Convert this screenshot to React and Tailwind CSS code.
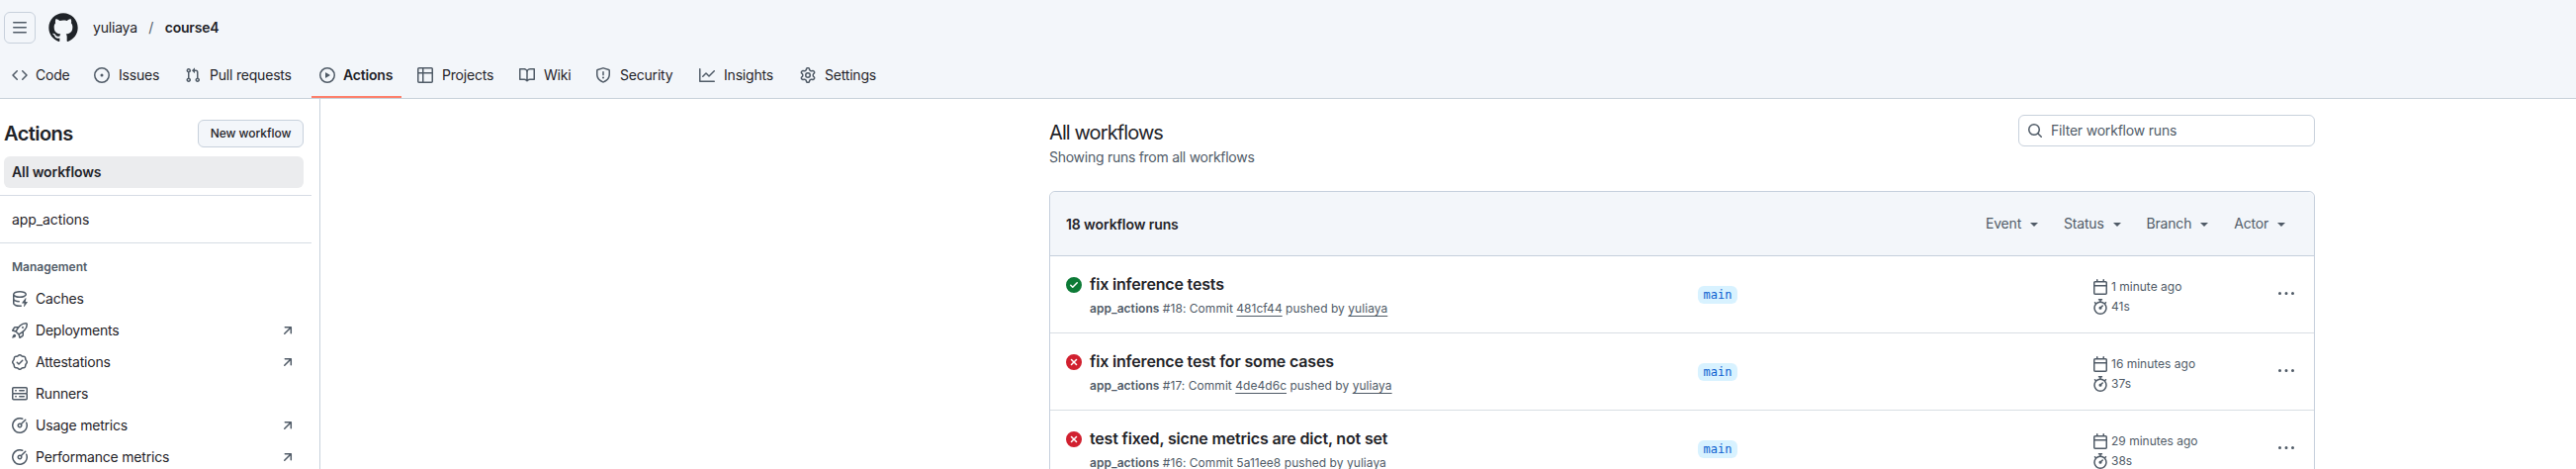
const paths = {
  code: "m11.28 3.22 4.25 4.25a.75.75 0 0 1 0 1.06l-4.25 4.25a.749.749 0 0 1-1.275-.326.749.749 0 0 1 .215-.734L13.94 8l-3.72-3.72a.749.749 0 0 1 .326-1.275.749.749 0 0 1 .734.215Zm-6.56 0a.751.751 0 0 1 1.042.018.751.751 0 0 1 .018 1.042L2.06 8l3.72 3.72a.749.749 0 0 1-.326 1.275.749.749 0 0 1-.734-.215L.47 8.53a.75.75 0 0 1 0-1.06Z",
  issue: "M8 9.5a1.5 1.5 0 1 0 0-3 1.5 1.5 0 0 0 0 3ZM8 0a8 8 0 1 1 0 16A8 8 0 0 1 8 0ZM1.5 8a6.5 6.5 0 1 0 13 0 6.5 6.5 0 0 0-13 0Z",
  pull: "M1.5 3.25a2.25 2.25 0 1 1 3 2.122v5.256a2.251 2.251 0 1 1-1.5 0V5.372A2.25 2.25 0 0 1 1.5 3.25Zm5.677-.177L9.573.677A.25.25 0 0 1 10 .854V2.5h1A2.5 2.5 0 0 1 13.5 5v5.628a2.251 2.251 0 1 1-1.5 0V5a1 1 0 0 0-1-1h-1v1.646a.25.25 0 0 1-.427.177L7.177 3.427a.25.25 0 0 1 0-.354ZM3.75 2.5a.75.75 0 1 0 0 1.5.75.75 0 0 0 0-1.5Zm0 9.5a.75.75 0 1 0 0 1.5.75.75 0 0 0 0-1.5Zm8.25.75a.75.75 0 1 0 1.5 0 .75.75 0 0 0-1.5 0Z",
  play: "M8 0a8 8 0 1 1 0 16A8 8 0 0 1 8 0ZM1.5 8a6.5 6.5 0 1 0 13 0 6.5 6.5 0 0 0-13 0Zm4.879-2.773 4.264 2.559a.25.25 0 0 1 0 .428l-4.264 2.559A.25.25 0 0 1 6 10.559V5.442a.25.25 0 0 1 .379-.215Z",
  table: "M0 1.75C0 .784.784 0 1.75 0h12.5C15.216 0 16 .784 16 1.75v12.5A1.75 1.75 0 0 1 14.25 16H1.75A1.75 1.75 0 0 1 0 14.25ZM6.5 6.5v8h7.75a.25.25 0 0 0 .25-.25V6.5Zm8-1.5V1.75a.25.25 0 0 0-.25-.25H6.5V5Zm-13 1.5v7.75c0 .138.112.25.25.25H5v-8ZM5 5V1.5H1.75a.25.25 0 0 0-.25.25V5Z",
  book: "M0 1.75A.75.75 0 0 1 .75 1h4.253c1.227 0 2.317.59 3 1.501A3.743 3.743 0 0 1 11.006 1h4.245a.75.75 0 0 1 .75.75v10.5a.75.75 0 0 1-.75.75h-4.507a2.25 2.25 0 0 0-1.591.659l-.622.621a.75.75 0 0 1-1.06 0l-.622-.621A2.25 2.25 0 0 0 5.258 13H.75a.75.75 0 0 1-.75-.75Zm7.251 10.324.004-5.073-.002-2.253A2.25 2.25 0 0 0 5.003 2.5H1.5v9h3.757a3.75 3.75 0 0 1 1.994.574ZM8.755 4.75l-.004 7.322a3.752 3.752 0 0 1 1.992-.572H14.5v-9h-3.495a2.25 2.25 0 0 0-2.25 2.25Z",
  shield: "M7.467.133a1.748 1.748 0 0 1 1.066 0l5.25 1.68A1.75 1.75 0 0 1 15 3.48V7c0 1.566-.32 3.182-1.303 4.682-.983 1.498-2.585 2.813-5.032 3.855a1.697 1.697 0 0 1-1.33 0c-2.447-1.042-4.049-2.357-5.032-3.855C1.32 10.182 1 8.566 1 7V3.48a1.75 1.75 0 0 1 1.217-1.667Zm.61 1.429a.25.25 0 0 0-.153 0l-5.25 1.68a.25.25 0 0 0-.174.238V7c0 1.358.275 2.666 1.057 3.86.784 1.194 2.121 2.34 4.366 3.297a.196.196 0 0 0 .154 0c2.245-.956 3.582-2.104 4.366-3.298C13.225 9.666 13.5 8.36 13.5 7V3.48a.251.251 0 0 0-.174-.237l-5.25-1.68ZM8.75 4.75v3a.75.75 0 0 1-1.5 0v-3a.75.75 0 0 1 1.5 0ZM9 10.5a1 1 0 1 1-2 0 1 1 0 0 1 2 0Z",
  graph: "M1.5 1.75V13.5h13.75a.75.75 0 0 1 0 1.5H.75a.75.75 0 0 1-.75-.75V1.75a.75.75 0 0 1 1.5 0Zm14.28 2.53-5.25 5.25a.75.75 0 0 1-1.06 0L7 7.06 4.28 9.78a.751.751 0 0 1-1.042-.018.751.751 0 0 1-.018-1.042l3.25-3.25a.75.75 0 0 1 1.06 0L10 7.94l4.72-4.72a.751.751 0 0 1 1.042.018.751.751 0 0 1 .018 1.042Z",
  gear: "M8 0a8.2 8.2 0 0 1 .701.031C9.444.095 9.99.645 10.16 1.29l.288 1.107c.018.066.079.158.212.224.231.114.454.243.668.386.123.082.233.09.299.071l1.103-.303c.644-.176 1.392.021 1.82.63.27.385.506.792.704 1.218.315.675.111 1.422-.364 1.891l-.814.806c-.049.048-.098.147-.088.294.016.257.016.515 0 .772-.01.147.038.246.088.294l.814.806c.475.469.679 1.216.364 1.891a7.977 7.977 0 0 1-.704 1.217c-.428.61-1.176.807-1.82.63l-1.102-.302c-.067-.019-.177-.011-.3.071a5.909 5.909 0 0 1-.668.386c-.133.066-.194.158-.211.224l-.29 1.106c-.168.646-.715 1.196-1.458 1.26a8.006 8.006 0 0 1-1.402 0c-.743-.064-1.289-.614-1.458-1.26l-.289-1.106c-.018-.066-.079-.158-.212-.224a5.738 5.738 0 0 1-.668-.386c-.123-.082-.233-.09-.299-.071l-1.103.303c-.644.176-1.392-.021-1.82-.63a8.12 8.12 0 0 1-.704-1.218c-.315-.675-.111-1.422.363-1.891l.815-.806c.05-.048.098-.147.088-.294a6.214 6.214 0 0 1 0-.772c.01-.147-.038-.246-.088-.294l-.815-.806C.635 6.045.431 5.298.746 4.623a7.92 7.92 0 0 1 .704-1.217c.428-.61 1.176-.807 1.82-.63l1.102.302c.067.019.177.011.3-.071.214-.143.437-.272.668-.386.133-.066.194-.158.211-.224l.29-1.106C6.009.645 6.556.095 7.299.03 7.53.01 7.764 0 8 0Zm-.571 1.525c-.036.003-.108.036-.137.146l-.289 1.105c-.147.561-.549.967-.998 1.189-.173.086-.34.183-.5.29-.417.278-.97.423-1.529.27l-1.103-.303c-.109-.03-.175.016-.195.045-.22.312-.412.644-.573.99-.014.031-.021.11.059.19l.815.806c.411.406.562.957.53 1.456a4.709 4.709 0 0 0 0 .582c.032.499-.119 1.05-.53 1.456l-.815.806c-.081.08-.073.159-.059.19.162.346.353.677.573.989.02.03.085.076.195.046l1.102-.303c.56-.153 1.113-.008 1.53.27.161.107.328.204.501.29.447.222.85.629.997 1.189l.289 1.105c.029.109.101.143.137.146a6.6 6.6 0 0 0 1.142 0c.036-.003.108-.036.137-.146l.289-1.105c.147-.561.549-.967.998-1.189.173-.086.34-.183.5-.29.417-.278.97-.423 1.529-.27l1.103.303c.109.029.175-.016.195-.045.22-.313.411-.644.573-.99.014-.031.021-.11-.059-.19l-.815-.806c-.411-.406-.562-.957-.53-1.456a4.709 4.709 0 0 0 0-.582c-.032-.499.119-1.05.53-1.456l.815-.806c.081-.08.073-.159.059-.19a6.464 6.464 0 0 0-.573-.989c-.02-.03-.085-.076-.195-.046l-1.102.303c-.56.153-1.113.008-1.53-.27a4.44 4.44 0 0 0-.501-.29c-.447-.222-.85-.629-.997-1.189l-.289-1.105c-.029-.11-.101-.143-.137-.146a6.6 6.6 0 0 0-1.142 0ZM11 8a3 3 0 1 1-6 0 3 3 0 0 1 6 0ZM9.5 8a1.5 1.5 0 1 0-3.001.001A1.5 1.5 0 0 0 9.5 8Z",
  bars: "M1 2.75A.75.75 0 0 1 1.75 2h12.5a.75.75 0 0 1 0 1.5H1.75A.75.75 0 0 1 1 2.75Zm0 5A.75.75 0 0 1 1.75 7h12.5a.75.75 0 0 1 0 1.5H1.75A.75.75 0 0 1 1 7.75ZM1.75 12h12.5a.75.75 0 0 1 0 1.5H1.75a.75.75 0 0 1 0-1.5Z",
  cache: "M2.5 5.724V8c0 .248.238.7 1.169 1.159.874.43 2.144.745 3.62.822a.75.75 0 1 1-.078 1.498c-1.622-.085-3.102-.432-4.204-.975a5.565 5.565 0 0 1-.507-.28V12.5c0 .133.058.318.282.551.227.237.591.483 1.101.707 1.015.447 2.47.742 4.117.742.406 0 .802-.018 1.183-.052a.751.751 0 1 1 .134 1.494C8.89 15.98 8.45 16 8 16c-1.805 0-3.475-.32-4.721-.869-.623-.274-1.173-.619-1.579-1.041-.408-.425-.7-.964-.7-1.59v-9c0-.626.292-1.165.7-1.591.406-.42.956-.766 1.579-1.04C4.525.32 6.195 0 8 0c1.806 0 3.476.32 4.721.869.623.274 1.173.619 1.579 1.041.408.425.7.964.7 1.59 0 .626-.292 1.165-.7 1.591-.406.42-.956.766-1.578 1.04C11.475 6.68 9.805 7 8 7c-1.805 0-3.475-.32-4.721-.869a6.15 6.15 0 0 1-.779-.407Zm0-2.224c0 .133.058.318.282.551.227.237.591.483 1.101.707C4.898 5.205 6.353 5.5 8 5.5c1.646 0 3.101-.295 4.118-.742.508-.224.873-.471 1.1-.708.224-.232.282-.417.282-.55 0-.133-.058-.318-.282-.551-.227-.237-.591-.483-1.101-.707C11.102 1.795 9.647 1.5 8 1.5c-1.646 0-3.101.295-4.118.742-.508.224-.873.471-1.1.708-.224.232-.282.417-.282.55ZM14.49 7.582a.375.375 0 0 0-.66-.313l-3.625 4.625a.375.375 0 0 0 .295.606h2.127l-.619 2.922a.375.375 0 0 0 .666.304l3.125-4.125A.375.375 0 0 0 15.5 11h-1.778l.769-3.418Z",
  rocket: "M14.064 0h.186C15.216 0 16 .784 16 1.75v.186a8.752 8.752 0 0 1-2.564 6.186l-.458.459c-.314.314-.641.616-.979.904v3.207c0 .608-.315 1.172-.833 1.49l-2.774 1.707a.749.749 0 0 1-1.11-.418l-.954-3.102a1.214 1.214 0 0 1-.145-.125L3.754 9.816a1.218 1.218 0 0 1-.124-.145L.528 8.717a.749.749 0 0 1-.418-1.11l1.71-2.774A1.748 1.748 0 0 1 3.31 4h3.204c.288-.338.59-.665.904-.979l.459-.458A8.749 8.749 0 0 1 14.064 0ZM8.938 3.623h-.002l-.458.458c-.76.76-1.437 1.598-2.02 2.5l-1.5 2.317 2.143 2.143 2.317-1.5c.902-.583 1.74-1.26 2.499-2.02l.459-.458a7.25 7.25 0 0 0 2.123-5.127V1.75a.25.25 0 0 0-.25-.25h-.186a7.249 7.249 0 0 0-5.125 2.123ZM3.56 14.56c-.732.732-2.334 1.045-3.005 1.148a.234.234 0 0 1-.201-.064.234.234 0 0 1-.064-.201c.103-.671.416-2.273 1.15-3.003a1.502 1.502 0 1 1 2.12 2.12Zm6.94-3.935c-.088.06-.177.118-.266.175l-2.35 1.521.548 1.783 1.949-1.2a.25.25 0 0 0 .119-.213ZM3.678 8.116 5.2 5.766c.058-.09.117-.178.176-.266H3.309a.25.25 0 0 0-.213.119l-1.2 1.95ZM12 5a1 1 0 1 1-2 0 1 1 0 0 1 2 0Z",
  verified: "m9.585.52.929.68c.153.112.331.186.518.215l1.138.175a2.678 2.678 0 0 1 2.24 2.24l.174 1.139c.029.187.103.365.215.518l.68.928a2.677 2.677 0 0 1 0 3.17l-.68.928a1.174 1.174 0 0 0-.215.518l-.175 1.138a2.678 2.678 0 0 1-2.241 2.241l-1.138.175a1.17 1.17 0 0 0-.518.215l-.928.68a2.677 2.677 0 0 1-3.17 0l-.928-.68a1.174 1.174 0 0 0-.518-.215L3.83 14.41a2.678 2.678 0 0 1-2.24-2.24l-.175-1.138a1.17 1.17 0 0 0-.215-.518l-.68-.928a2.677 2.677 0 0 1 0-3.17l.68-.928c.112-.153.186-.331.215-.518l.175-1.14a2.678 2.678 0 0 1 2.24-2.24l1.139-.175c.187-.029.365-.103.518-.215l.928-.68a2.677 2.677 0 0 1 3.17 0ZM7.303 1.728l-.927.68a2.67 2.67 0 0 1-1.18.489l-1.137.174a1.179 1.179 0 0 0-.987.987l-.174 1.136a2.677 2.677 0 0 1-.489 1.18l-.68.928a1.18 1.18 0 0 0 0 1.394l.68.927c.256.348.424.753.489 1.18l.174 1.137c.078.509.478.909.987.987l1.136.174a2.67 2.67 0 0 1 1.18.489l.928.68c.414.305.979.305 1.394 0l.927-.68a2.67 2.67 0 0 1 1.18-.489l1.137-.174a1.18 1.18 0 0 0 .987-.987l.174-1.136a2.67 2.67 0 0 1 .489-1.18l.68-.928a1.176 1.176 0 0 0 0-1.394l-.68-.927a2.686 2.686 0 0 1-.489-1.18l-.174-1.137a1.179 1.179 0 0 0-.987-.987l-1.136-.174a2.677 2.677 0 0 1-1.18-.489l-.928-.68a1.176 1.176 0 0 0-1.394 0ZM11.28 6.78l-3.75 3.75a.75.75 0 0 1-1.06 0L4.72 8.78a.751.751 0 0 1 .018-1.042.751.751 0 0 1 1.042-.018L7 8.94l3.22-3.22a.751.751 0 0 1 1.042.018.751.751 0 0 1 .018 1.042Z",
  server: "M1.75 1h12.5c.966 0 1.75.784 1.75 1.75v4c0 .372-.116.717-.314 1 .198.283.314.628.314 1v4a1.75 1.75 0 0 1-1.75 1.75H1.75A1.75 1.75 0 0 1 0 12.75v-4c0-.358.109-.707.314-1a1.739 1.739 0 0 1-.314-1v-4C0 1.784.784 1 1.75 1ZM1.5 2.75v4c0 .138.112.25.25.25h12.5a.25.25 0 0 0 .25-.25v-4a.25.25 0 0 0-.25-.25H1.75a.25.25 0 0 0-.25.25Zm.25 5.75a.25.25 0 0 0-.25.25v4c0 .138.112.25.25.25h12.5a.25.25 0 0 0 .25-.25v-4a.25.25 0 0 0-.25-.25ZM7 4.75A.75.75 0 0 1 7.75 4h4.5a.75.75 0 0 1 0 1.5h-4.5A.75.75 0 0 1 7 4.75ZM7.75 10h4.5a.75.75 0 0 1 0 1.5h-4.5a.75.75 0 0 1 0-1.5ZM3 4.75A.75.75 0 0 1 3.75 4h.5a.75.75 0 0 1 0 1.5h-.5A.75.75 0 0 1 3 4.75ZM3.75 10h.5a.75.75 0 0 1 0 1.5h-.5a.75.75 0 0 1 0-1.5Z",
  meter: "M8 1.5a6.5 6.5 0 1 0 6.016 4.035.75.75 0 0 1 1.388-.57 8 8 0 1 1-4.37-4.37.75.75 0 1 1-.569 1.389A6.473 6.473 0 0 0 8 1.5Zm6.28.22a.75.75 0 0 1 0 1.06l-4.063 4.064a2.5 2.5 0 1 1-1.06-1.06L13.22 1.72a.75.75 0 0 1 1.06 0ZM7 8a1 1 0 1 0 2 0 1 1 0 0 0-2 0Z",
  arrow: "M4.53 4.75A.75.75 0 0 1 5.28 4h6.01a.75.75 0 0 1 .75.75v6.01a.75.75 0 0 1-1.5 0v-4.2l-5.26 5.261a.749.749 0 0 1-1.275-.326.749.749 0 0 1 .215-.734L9.48 5.5h-4.2a.75.75 0 0 1-.75-.75Z",
  search: "M10.68 11.74a6 6 0 0 1-7.922-8.982 6 6 0 0 1 8.982 7.922l3.04 3.04a.749.749 0 0 1-.326 1.275.749.749 0 0 1-.734-.215ZM11.5 7a4.499 4.499 0 1 0-8.997 0A4.499 4.499 0 0 0 11.5 7Z",
  check: "M8 16A8 8 0 1 1 8 0a8 8 0 0 1 0 16Zm3.78-9.72a.751.751 0 0 0-.018-1.042.751.751 0 0 0-1.042-.018L6.75 9.19 5.28 7.72a.751.751 0 0 0-1.042.018.751.751 0 0 0-.018 1.042l2 2a.75.75 0 0 0 1.06 0Z",
  fail: "M2.343 13.657A8 8 0 1 1 13.658 2.343 8 8 0 0 1 2.343 13.657ZM6.03 4.97a.751.751 0 0 0-1.042.018.751.751 0 0 0-.018 1.042L6.94 8 4.97 9.97a.749.749 0 0 0 .326 1.275.749.749 0 0 0 .734-.215L8 9.06l1.97 1.97a.749.749 0 0 0 1.275-.326.749.749 0 0 0-.215-.734L9.06 8l1.97-1.97a.749.749 0 0 0-.326-1.275.749.749 0 0 0-.734.215L8 6.94Z",
  calendar: "M4.75 0a.75.75 0 0 1 .75.75V2h5V.75a.75.75 0 0 1 1.5 0V2h1.25c.966 0 1.75.784 1.75 1.75v10.5A1.75 1.75 0 0 1 13.25 16H2.75A1.75 1.75 0 0 1 1 14.25V3.75C1 2.784 1.784 2 2.75 2H4V.75A.75.75 0 0 1 4.75 0ZM2.5 7.5v6.75c0 .138.112.25.25.25h10.5a.25.25 0 0 0 .25-.25V7.5Zm10.75-4H2.75a.25.25 0 0 0-.25.25V6h11V3.75a.25.25 0 0 0-.25-.25Z",
  stopwatch: "M5.75.75A.75.75 0 0 1 6.5 0h3a.75.75 0 0 1 0 1.5h-.75v1l-.001.041a6.724 6.724 0 0 1 3.464 1.435l.007-.006.75-.75a.749.749 0 0 1 1.275.326.749.749 0 0 1-.215.734l-.75.75-.006.007a6.75 6.75 0 1 1-10.548 0L2.72 5.03l-.75-.75a.751.751 0 0 1 .018-1.042.751.751 0 0 1 1.042-.018l.75.75.007.006A6.72 6.72 0 0 1 7.25 2.541V1.5H6.5a.75.75 0 0 1-.75-.75ZM8 14.5a5.25 5.25 0 1 0-.001-10.501A5.25 5.25 0 0 0 8 14.5Zm.389-6.7 1.33-1.33a.75.75 0 1 1 1.061 1.06L9.45 8.861A1.503 1.503 0 0 1 8 10.75a1.499 1.499 0 1 1 .389-2.95Z",
  kebab: "M8 9a1.5 1.5 0 1 0 0-3 1.5 1.5 0 0 0 0 3ZM1.5 9a1.5 1.5 0 1 0 0-3 1.5 1.5 0 0 0 0 3Zm13 0a1.5 1.5 0 1 0 0-3 1.5 1.5 0 0 0 0 3Z",
};

function Icon({ name, className = "text-[#505b67]" }) {
  return (
    <svg viewBox="0 0 16 16" width="16" height="16" fill="currentColor" className={`shrink-0 ${className}`}>
      <path d={paths[name]} />
    </svg>
  );
}

const tabs = [
  ["code", "Code", "w-[75px] gap-2"],
  ["issue", "Issues", "w-[84px] gap-[9px]"],
  ["pull", "Pull requests", "w-[128px] gap-[9px]"],
  ["play", "Actions", "w-[91px] gap-2"],
  ["table", "Projects", "w-[95px] gap-[9px]"],
  ["book", "Wiki", "w-[69px] gap-[9px]"],
  ["shield", "Security", "w-[97px] gap-[9px]"],
  ["graph", "Insights", "w-[94px] gap-[9px]"],
  ["gear", "Settings", "w-[95px] gap-[9px]"],
];

const management = [
  ["cache", "Caches", false],
  ["rocket", "Deployments", true],
  ["verified", "Attestations", true],
  ["server", "Runners", false],
  ["meter", "Usage metrics", true],
  ["meter", "Performance metrics", true],
];

const runs = [
  { ok: true, title: "fix inference tests", num: 18, sha: "481cf44", ago: "1 minute ago", took: "41s" },
  { ok: false, title: "fix inference test for some cases", num: 17, sha: "4de4d6c", ago: "16 minutes ago", took: "37s" },
  { ok: false, title: "test fixed, sicne metrics are dict, not set", num: 16, sha: "5a11ee8", ago: "29 minutes ago", took: "38s" },
];

function Header() {
  return (
    <header className="flex h-[100px] flex-col border-b border-[#c8d1da] bg-[#f3f6fa]">
      <div className="flex h-14 shrink-0 items-center pl-1">
        <button className="flex h-8 w-8 items-center justify-center rounded-md border border-[#c8d1dc]">
          <Icon name="bars" />
        </button>
        <svg viewBox="0 0 24 24" width="32" height="32" fill="currentColor" className="ml-3">
          <path d="M12 1C5.923 1 1 5.923 1 12c0 4.867 3.149 8.979 7.521 10.436.55.096.756-.233.756-.522 0-.262-.013-1.128-.013-2.049-2.764.509-3.479-.674-3.699-1.292-.124-.317-.66-1.293-1.127-1.554-.385-.207-.936-.715-.014-.729.866-.014 1.485.797 1.691 1.128.99 1.663 2.571 1.196 3.204.907.096-.715.385-1.196.701-1.471-2.448-.275-5.005-1.224-5.005-5.432 0-1.196.426-2.186 1.128-2.956-.111-.275-.496-1.402.11-2.915 0 0 .921-.288 3.024 1.128a10.193 10.193 0 0 1 2.75-.371c.936 0 1.871.123 2.75.371 2.104-1.43 3.025-1.128 3.025-1.128.605 1.513.221 2.64.111 2.915.701.77 1.127 1.747 1.127 2.956 0 4.222-2.571 5.157-5.019 5.432.399.344.743 1.004.743 2.035 0 1.471-.014 2.654-.014 3.025 0 .289.206.632.756.522C19.851 20.979 23 16.854 23 12c0-6.077-4.922-11-11-11Z" />
        </svg>
        <nav className="ml-3.5 flex items-center">
          <span>yuliaya</span>
          <span className="mx-[11.5px] text-[#505b67]">/</span>
          <span className="font-semibold">course4</span>
        </nav>
      </div>
      <nav className="flex h-11 gap-2 pl-1">
        {tabs.map(([icon, label, size]) => (
          <a
            key={label}
            className={`flex h-[43px] shrink-0 items-center border-b-2 px-2 pb-px whitespace-nowrap ${size} ${
              label === "Actions" ? "border-[#fd7f6b] font-semibold" : "border-transparent"
            }`}
          >
            <Icon name={icon} />
            {label}
          </a>
        ))}
      </nav>
    </header>
  );
}

function Sidebar() {
  return (
    <aside className="w-[324px] shrink-0 border-r border-[#c8d1dc] pt-[21px] pr-2">
      <div className="flex items-center justify-between pr-2 pl-1">
        <h2 className="text-xl leading-7 font-semibold tracking-[-0.55px]">Actions</h2>
        <button className="h-7 w-[107px] rounded-md border border-[#c8d1dc] bg-[#f3f6fa] text-xs font-medium tracking-[-0.05px]">New workflow</button>
      </div>
      <div className="mt-[9px] mr-2 ml-1 flex h-8 items-center rounded-md bg-[#ebecee] px-2 font-semibold tracking-[-0.1px]">All workflows</div>
      <div className="mt-[7px] flex h-[49px] items-center border-y border-[#d6dce4] px-3 tracking-[-0.1px]">app_actions</div>
      <div className="mt-[15px] px-3 text-xs leading-[18px] font-semibold tracking-normal text-[#505b67]">Management</div>
      <ul className="mt-[7px]">
        {management.map(([icon, label, ext]) => (
          <li key={label} className="flex h-8 items-center gap-2 pr-4 pl-3">
            <Icon name={icon} />
            <span className="flex-1">{label}</span>
            {ext && <Icon name="arrow" />}
          </li>
        ))}
      </ul>
    </aside>
  );
}

function Run({ run }) {
  return (
    <div className="flex h-[78px] border-b border-[#d9dee4] text-xs tracking-normal text-[#505b67]">
      <div className="flex w-[655px] shrink-0 gap-2 pt-4 pl-4">
        <Icon name={run.ok ? "check" : "fail"} className={run.ok ? "mt-[5px] text-[#0c7a36]" : "mt-[5px] text-[#d1202f]"} />
        <div>
          <h3 className="text-base leading-6 font-semibold tracking-[-0.17px] text-[#1f2328]">{run.title}</h3>
          <p className="mt-1 leading-[18px] tracking-[0.04px]">
            <b className="font-semibold">app_actions</b> #{run.num}: Commit{" "}
            <a className="underline underline-offset-3">{run.sha}</a> pushed by{" "}
            <a className="underline underline-offset-3">yuliaya</a>
          </p>
        </div>
      </div>
      <div className="w-[399px] shrink-0 pt-[30px]">
        <span className="flex h-[18px] w-10 items-center justify-center rounded-md bg-[#d8f2ff] font-['DejaVu_Sans_Mono',monospace] text-[#0b61d0]">main</span>
      </div>
      <div className="w-[188px] shrink-0 pt-[21px]">
        <div className="flex h-5 items-center gap-[3px] leading-5">
          <Icon name="calendar" />
          {run.ago}
        </div>
        <div className="flex h-5 items-center gap-[3px] leading-5">
          <Icon name="stopwatch" />
          {run.took}
        </div>
      </div>
      <div className="pt-[30px]">
        <Icon name="kebab" />
      </div>
    </div>
  );
}

export default function App() {
  return (
    <div className="flex h-[474px] flex-col overflow-hidden bg-white font-['Inter',sans-serif] text-sm tracking-[-0.2px] text-[#1f2328]">
      <Header />
      <div className="flex min-h-0 flex-1">
        <Sidebar />
        <main className="ml-[737px] w-[1280px] shrink-0">
          <div className="flex h-[93px] justify-between pt-4">
            <div className="pt-1">
              <h2 className="text-xl leading-7 tracking-[-0.9px]">All workflows</h2>
              <p className="mt-px tracking-[-0.27px] text-[#505b67]">Showing runs from all workflows</p>
            </div>
            <div className="flex h-8 w-[300px] items-center gap-2 rounded-md border border-[#c8d1dc] px-2 text-[#505b67]">
              <Icon name="search" />
              Filter workflow runs
            </div>
          </div>
          <div className="rounded-t-md border border-[#c5cfdc]">
            <div className="flex h-[65px] items-center rounded-t-md border-b border-[#c5cfdc] bg-[#f3f6fa] pl-4">
              <span className="flex-1 pt-0.5 font-semibold tracking-[-0.1px]">18 workflow runs</span>
              <div className="flex gap-[26px] pr-[29px] text-[#505b67]">
                {["Event", "Status", "Branch", "Actor"].map((label) => (
                  <span key={label} className="flex items-center gap-[9px]">
                    {label}
                    <svg viewBox="0 0 8 4" width="8" height="4" fill="currentColor" className="mt-0.5">
                      <path d="M0 0h8L4 4Z" />
                    </svg>
                  </span>
                ))}
              </div>
            </div>
            {runs.map((run) => (
              <Run key={run.num} run={run} />
            ))}
          </div>
        </main>
      </div>
    </div>
  );
}
